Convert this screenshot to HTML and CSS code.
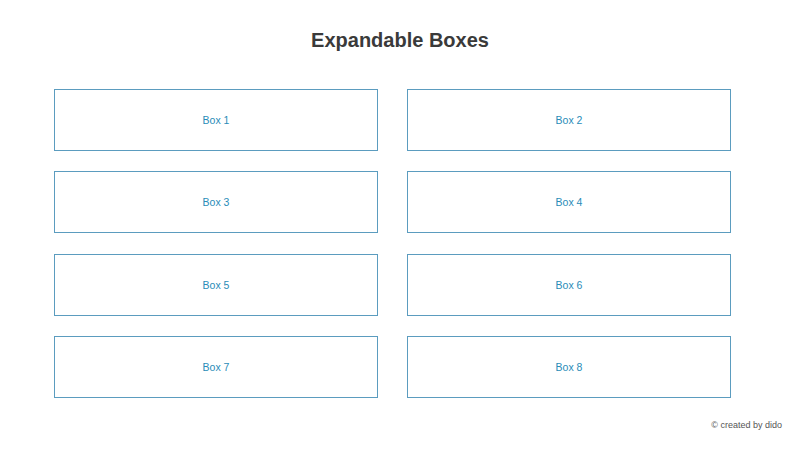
FILE: index.html
```html
<!DOCTYPE html>
<html lang="en">
<head>
  <meta charset="UTF-8" />
  <title>Expandable Boxes</title>
  <link rel="stylesheet" href="styles.css">
</head>
<body>
  <h1>Expandable Boxes</h1>
  <div class="box-grid">
    <div class="box">Box 1</div>
    <div class="box">Box 2</div>
    <div class="box">Box 3</div>
    <div class="box">Box 4</div>
    <div class="box">Box 5</div>
    <div class="box">Box 6</div>
    <div class="box">Box 7</div>
    <div class="box">Box 8</div>
  </div>
  <footer class="credit">© created by dido</footer>
</body>
</html>
```

FILE: styles.css
```css
body {
  font-family: "Liberation Sans", Arial, sans-serif;
  background: #fff;
  color: #333;
  margin: 0;
}

h1 {
  margin: 28px 0 0;
  font-size: 20px;
  line-height: 24px;
  text-align: center;
  color: #3a3a3a;
}

.box-grid {
  display: grid;
  grid-template-columns: 324px 324px;
  column-gap: 29px;
  row-gap: 20.4px;
  margin: 37px 0 0 54px;
}

.box {
  height: 60px;
  border: 1px solid #5b9cbf;
  color: #2a8cb8;
  font-size: 10.5px;
  line-height: 14px;
  display: flex;
  align-items: center;
  justify-content: center;
  cursor: pointer;
}

.credit {
  text-align: right;
  font-size: 9px;
  color: #555;
  padding-right: 18px;
  margin-top: 22px;
}
```
